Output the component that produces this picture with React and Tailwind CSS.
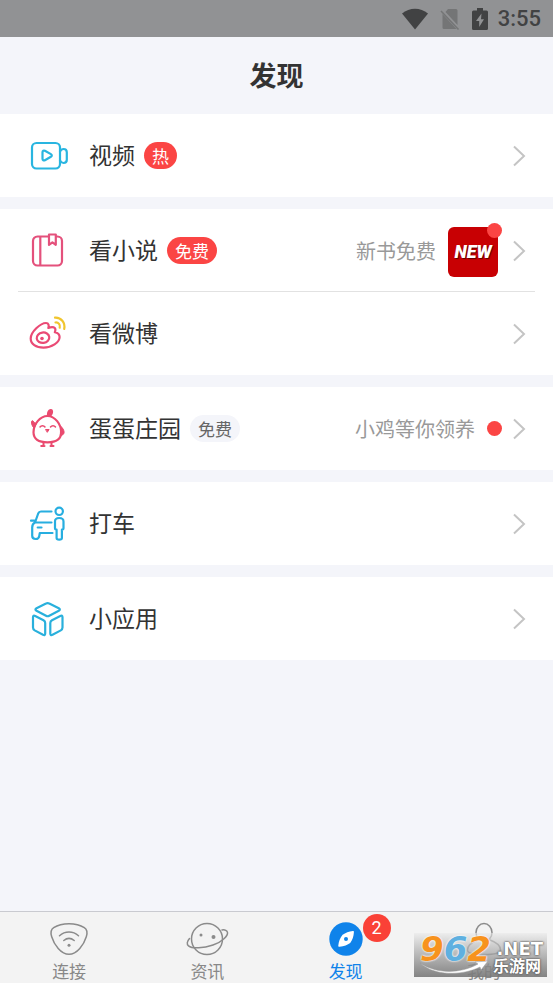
import clsx from 'clsx'

function VideoIcon() {
  return (
    <svg viewBox="0 0 40 40" className="h-10 w-10" fill="none" stroke="#29b5e0" strokeWidth="2.2" strokeLinecap="round" strokeLinejoin="round" aria-hidden="true">
      <rect x="4" y="7" width="28" height="25.5" rx="4.5" />
      <path d="M32 15.500c1-2 2-2.500 3.500-2.500 2.500 0 3.300 1.200 3.300 3.200v7.600c0 2-.8 3.200-3.300 3.200-1.500 0-2.500-.7-3.500-2.500" />
      <path d="M14.500 16.200c0-1.400 1.200-2 2.400-1.400l6 3.300c1.200.7 1.200 2 0 2.700l-6 3.400c-1.200.6-2.400 0-2.400-1.400z" />
    </svg>
  )
}

function BookIcon() {
  return (
    <svg viewBox="0 0 40 40" className="h-10 w-10" fill="none" stroke="#e4517c" strokeWidth="2.2" strokeLinejoin="round" aria-hidden="true">
      <path d="M21 5.500H9.500a4.500 4.500 0 0 0-4.500 4.500v20a4.500 4.500 0 0 0 4.500 4.500h20a4.500 4.500 0 0 0 4.500-4.500V10a4.500 4.500 0 0 0-4.500-4.500H28M12.300 5.500v29" />
      <path d="M21 3.500h6.800v10.300l-3.400-2.500-3.400 2.500z" />
    </svg>
  )
}

function WeiboIcon() {
  return (
    <svg viewBox="0 0 40 40" className="h-10 w-10" fill="none" stroke="#ea4a75" strokeWidth="2.2" strokeLinecap="round" strokeLinejoin="round" aria-hidden="true">
      <path d="M2.700 24.500c0-6.500 9.800-15.500 15.300-15.500 2.700 0 3.200 2.500 2.300 5 2.200-.9 5-1.400 6.500 0 1.200 1.200.6 2.800 0 4.300 3 .7 4.800 2.200 4.800 4.700 0 5.500-8 10.700-16.100 10.700C8 33.700 2.700 30 2.700 24.500z" />
      <ellipse cx="15" cy="23.700" rx="6.300" ry="5.200" transform="rotate(-8 15 23.700)" />
      <circle cx="14" cy="24.500" r="1.800" fill="#ea4a75" stroke="none" />
      <path d="M27 3.700c6-.5 10.500 5 9.200 11.300M27.500 8.500c3-.3 5 2.200 4.200 5.200" stroke="#f0c52e" />
    </svg>
  )
}

function ChickIcon() {
  return (
    <svg viewBox="0 0 40 40" className="h-10 w-10" fill="none" stroke="#ea4a6f" strokeWidth="2.2" strokeLinecap="round" strokeLinejoin="round" aria-hidden="true">
      <path d="M19.500 7c7.500 0 13.700 8.300 13.700 16.300 0 6.500-4.500 10-13.700 10s-14-3.500-14-10C5.500 15.300 12 7 19.500 7z" />
      <path d="M19 7.500c-.6-4.500 1.500-7.700 4-7.500 3 .2 2.700 5-.2 7.500z" fill="#ea4a6f" stroke="none" />
      <path d="M8 14.500C6 14.500 5.500 11.500 4.200 11.700 2.700 12 3.500 17 6 19zM33 17.500c3.500 3 5 8.500-.3 9z" fill="#ea4a6f" strokeWidth="1" />
      <path d="M12 18c1.200-1.800 3.800-1.800 5 0M22.500 18c1.200-1.800 3.800-1.800 5 0" strokeWidth="1.500" />
      <path d="M17.900 20.500h3.200L19.500 23z" fill="#ea4a6f" strokeWidth="1" />
      <path d="M15.500 33.500v3.500h-2.300M15.500 37h1M23.500 33.500v3.500h-1M23.500 37h2" strokeWidth="2" />
    </svg>
  )
}

function TaxiIcon() {
  return (
    <svg viewBox="0 0 40 40" className="h-10 w-10" fill="none" stroke="#27aee0" strokeWidth="2.2" strokeLinecap="round" strokeLinejoin="round" aria-hidden="true">
      <path d="M23.500 7.500H13c-1.500 0-2.300.7-2.800 2L7 18.500h16.500M3 16.700h4.300M7 18.500c-2 1-2.800 2.500-2.800 5v8.300c0 2 1.200 3.200 3.500 3.200s3.300-1.200 3.600-3.200l.5-2.800h12.700M9.700 23.500h3.800" />
      <circle cx="31.200" cy="7.300" r="3.700" />
      <path d="M27 17.500c0-2.300 1.700-3.500 4.200-3.500s4.300 1.200 4.300 3.500V24c0 1.200-.6 1.700-1.600 1.700V34c0 1.200-.7 1.700-2.700 1.700s-2.600-.5-2.600-1.700v-8.300c-1 0-1.600-.5-1.600-1.700z" />
    </svg>
  )
}

function CubeIcon() {
  return (
    <svg viewBox="0 0 40 40" className="h-10 w-10" fill="none" stroke="#29b0dc" strokeWidth="2.2" strokeLinejoin="round" aria-hidden="true">
      <path d="M18 4.500c1.100-.6 2.200-.6 3.300 0l9.500 4.700c1.400.8 1.400 1.800 0 2.600l-9.500 5c-1.100.6-2.200.6-3.300 0L8.500 11.800c-1.400-.8-1.400-1.800 0-2.600z" />
      <path d="M5 18.200c0-1.600.8-2 2.200-1.300l8.300 4.300c1.200.7 1.700 1.500 1.700 2.800v10.500c0 1.600-.8 2-2.200 1.300l-8.300-4.400C5.500 30.700 5 29.900 5 28.600z" />
      <path d="M34.500 18.200c0-1.600-.8-2-2.200-1.300l-8.300 4.300c-1.200.7-1.700 1.500-1.700 2.800v10.500c0 1.600.8 2 2.200 1.300l8.300-4.400c1.200-.7 1.700-1.500 1.700-2.800z" />
    </svg>
  )
}

function ConnectIcon() {
  return (
    <svg viewBox="0 0 44 36" className="h-9 w-11" fill="none" stroke="#8b8b8b" strokeWidth="1.500" strokeLinecap="round" aria-hidden="true">
      <path d="M22 2.700c6 0 11.500 1.500 15.300 4 2.800 1.800 3.200 5.300 2 9C37 23.500 30 33.300 22 33.300S7 23.500 4.700 15.700c-1.200-3.700-.8-7.200 2-9 3.800-2.500 9.300-4 15.300-4z" />
      <path d="M12.500 14.700c5.500-4.800 13.500-4.800 19 0M16.800 19.500c3.200-2.600 7.200-2.600 10.400 0" />
      <circle cx="22" cy="24.300" r="1.500" fill="#8b8b8b" stroke="none" />
    </svg>
  )
}

function PlanetIcon() {
  return (
    <svg viewBox="0 0 44 36" className="h-9 w-11" fill="none" stroke="#8b8b8b" strokeWidth="1.500" strokeLinecap="round" aria-hidden="true">
      <circle cx="22" cy="18" r="15.500" />
      <path d="M4.500 17.500c-2.500 2.800-3 5.700-1 7.300 4 3.200 15 2.400 24.500-.8S43 14.500 42.500 11.500c-.3-2-2.500-3-5.500-2.500" />
      <circle cx="16" cy="14" r="1.500" fill="#8b8b8b" stroke="none" />
      <circle cx="28.500" cy="16" r="2" fill="#8b8b8b" stroke="none" />
    </svg>
  )
}

function CompassIcon() {
  return (
    <svg viewBox="0 0 44 36" className="h-9 w-11" aria-hidden="true">
      <circle cx="22" cy="18" r="16.700" fill="#0f83ea" />
      <path d="M28.800 10c1 0 1.200.4 1.100 1.300-.3 4-1.300 7.700-3.700 10.700-2.700 2-6 3.300-10.700 3.700-.9.100-1.300-.3-1.200-1.200.5-4 1.700-7.700 4.300-10.700 3-2 6.200-3.300 10.200-3.800z" fill="#fff" />
      <circle cx="22" cy="18" r="2" fill="#0f83ea" />
    </svg>
  )
}

function UserIcon() {
  return (
    <svg viewBox="0 0 44 36" className="h-9 w-11" fill="none" stroke="#8b8b8b" strokeWidth="1.500" strokeLinecap="round" aria-hidden="true">
      <ellipse cx="22" cy="11.500" rx="8" ry="9" />
      <path d="M16 19C9 21.500 5.500 25 5.500 29c0 3 6 4.500 16.500 4.500S38.500 32 38.500 29c0-4-3.500-7.500-10.500-10" />
    </svg>
  )
}

function Chevron() {
  return (
    <svg viewBox="0 0 14 22" className="ml-3.5 h-[22px] w-3.5 shrink-0" fill="none" stroke="#c4c4c4" strokeWidth="2" aria-hidden="true">
      <path d="M2 1.500l10 9.500-10 9.500" />
    </svg>
  )
}

const sections = [
  [{ id: 'video', label: '视频', icon: VideoIcon, tag: '热', hot: true }],
  [
    { id: 'novel', label: '看小说', icon: BookIcon, tag: '免费', hot: true, hint: '新书免费', cover: true },
    { id: 'weibo', label: '看微博', icon: WeiboIcon },
  ],
  [{ id: 'farm', label: '蛋蛋庄园', icon: ChickIcon, tag: '免费', hint: '小鸡等你领养', dot: true }],
  [{ id: 'taxi', label: '打车', icon: TaxiIcon }],
  [{ id: 'apps', label: '小应用', icon: CubeIcon }],
]

const tabs = [
  { id: 'connect', label: '连接', icon: ConnectIcon },
  { id: 'news', label: '资讯', icon: PlanetIcon },
  { id: 'discover', label: '发现', icon: CompassIcon, badge: 2, active: true },
  { id: 'mine', label: '我的', icon: UserIcon },
]

function StatusBar() {
  return (
    <div className="flex h-[37px] items-center justify-end bg-[#919294] pr-3 text-[#414243]">
      <svg viewBox="0 0 26 22" className="mr-3 h-[22px] w-[26px]" fill="currentColor" aria-hidden="true">
        <path d="M0 5.500C7.500-.8 18.500-.8 26 5.500L13 21.500z" />
      </svg>
      <svg viewBox="0 0 20 22" className="mr-3 h-[22px] w-5" fill="#747576" aria-hidden="true">
        <path d="M8 1h8a1.500 1.500 0 0 1 1.500 1.500v14.500L5.500 4zM2.500 6L16.500 21H4a1.500 1.500 0 0 1-1.500-1.500z" />
        <path d="M1 3l17.500 18.500" stroke="#747576" strokeWidth="1.500" />
      </svg>
      <svg viewBox="0 0 16 22" className="mr-2.5 h-[22px] w-4" aria-hidden="true">
        <path d="M5 0h6v2.500h3.500A1.500 1.500 0 0 1 16 4v16.500a1.500 1.500 0 0 1-1.500 1.500h-13A1.500 1.500 0 0 1 0 20.500V4a1.500 1.500 0 0 1 1.500-1.500H5z" fill="currentColor" />
        <path d="M9.500 5.500L4 13h3.200v6L12 11.300H9z" fill="#919294" />
      </svg>
      <span className="font-[Roboto,sans-serif] text-[22px] leading-6 font-medium">3:55</span>
    </div>
  )
}

function Row({ item }) {
  const Icon = item.icon

  return (
    <a href={`#${item.id}`} className="flex h-[83px] items-center pr-[27px] pl-7">
      <Icon />
      <span className="ml-[21px] pb-[3px] text-[23px] leading-8 text-[#333]">{item.label}</span>
      {item.tag && (
        <span
          className={clsx(
            'ml-[9px] flex h-[27px] items-center rounded-full px-2 text-[17px] leading-6',
            item.hot ? 'bg-[#fb4544] text-white' : 'bg-[#f4f5fa] text-[#666]',
          )}
        >
          {item.tag}
        </span>
      )}
      <span className="ml-auto text-xl text-[#999]">{item.hint}</span>
      {item.cover && (
        <span className="relative mt-0.5 ml-3 flex h-[50px] w-[50px] items-center justify-center rounded-md bg-[#c80003] font-[Roboto,sans-serif] text-lg font-black text-white italic [text-shadow:1px_1px_1px_#5a0000]">
          NEW
          <span className="absolute -top-1 -right-1 h-[15px] w-[15px] rounded-full bg-[#fb4544]" />
        </span>
      )}
      {item.dot && <span className="-mr-1 ml-3 h-[15px] w-[15px] rounded-full bg-[#fb4544]" />}
      <Chevron />
    </a>
  )
}

function Watermark() {
  return (
    <div className="absolute right-1.5 bottom-1.5 h-11 w-[133px] bg-linear-to-b from-[#e9e9e9]/60 to-[#777]/90 font-['DejaVu_Sans','Noto_Sans_CJK_SC',sans-serif] font-bold text-white">
      <span className="absolute top-0 left-1.5 text-[34px] leading-8 italic [text-shadow:0_0_2px_#fff,0_0_2px_#fff]">
        <span className="text-[#f7931e]">9</span>
        <span className="text-[#5fb0e0]">6</span>
        <span className="text-[#f7931e]">2</span>
      </span>
      <svg viewBox="0 0 70 14" className="absolute bottom-0.5 left-1.5 h-3.5 w-[70px]" aria-hidden="true">
        <path d="M0 2c16 11 40 11 58 1l-3-2 13-1-7 9-1-3C42 15 14 15 0 2z" fill="#fff" stroke="#999" strokeWidth=".5" />
      </svg>
      <span className="absolute top-1 right-1 text-lg leading-6 [text-shadow:0_0_2px_#555,0_0_2px_#555]">.NET</span>
      <span className="absolute right-1.5 bottom-0 text-base leading-5 [text-shadow:0_0_2px_#555,0_0_2px_#555]">乐游网</span>
    </div>
  )
}

function TabBar() {
  return (
    <nav className="relative mt-auto grid grid-cols-4 border-t border-[#c9cad0] bg-[#f3f3f3] pt-[9px] pb-0.5">
      {tabs.map((tab) => {
        const Icon = tab.icon

        return (
          <a
            key={tab.id}
            href={`#${tab.id}`}
            className={clsx(
              'flex flex-col items-center gap-1 text-[17px] leading-5',
              tab.active ? 'text-[#0f83ea]' : 'text-[#888]',
            )}
          >
            <span className="relative">
              <Icon />
              {tab.badge && (
                <span className="absolute -top-[7px] left-[39px] flex h-7 w-7 items-center justify-center rounded-full bg-[#fa4137] font-[Roboto,sans-serif] text-lg text-white">
                  {tab.badge}
                </span>
              )}
            </span>
            {tab.label}
          </a>
        )
      })}
      <Watermark />
    </nav>
  )
}

function App() {
  return (
    <div className="flex min-h-screen flex-col bg-[#f4f5fa] font-['Noto_Sans_CJK_SC',sans-serif]">
      <StatusBar />
      <header className="flex h-[77px] items-center justify-center">
        <h1 className="text-[27px] font-bold text-[#333]">发现</h1>
      </header>
      <main className="flex flex-col gap-3">
        {sections.map((items) => (
          <section key={items[0].id} className="bg-white">
            {items.map((item, index) => (
              <div key={item.id}>
                {index > 0 && <hr className="mx-[18px] -mt-px border-[#e2e2e2]" />}
                <Row item={item} />
              </div>
            ))}
          </section>
        ))}
      </main>
      <TabBar />
    </div>
  )
}

export default App
